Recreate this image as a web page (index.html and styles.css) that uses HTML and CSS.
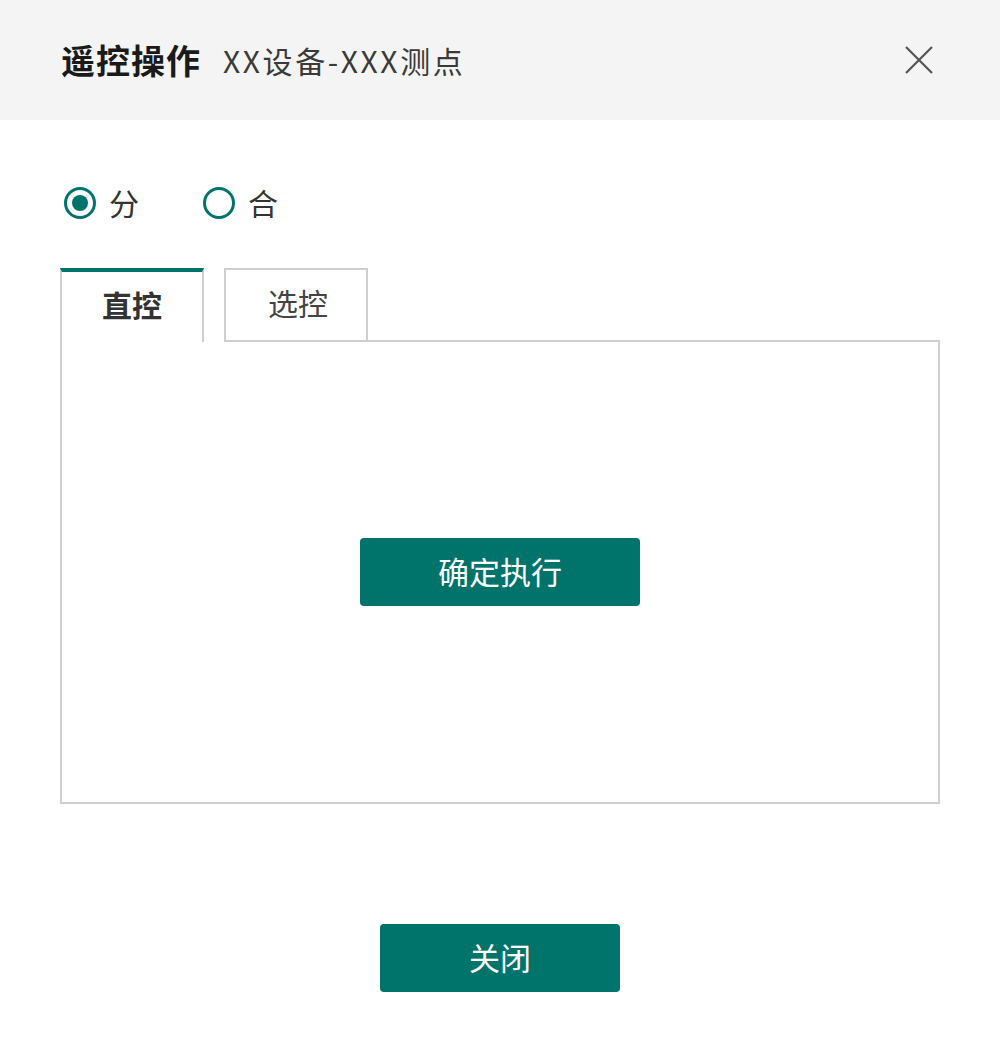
FILE: index.html
```html
<!DOCTYPE html>
<html lang="zh-CN">
<head>
<meta charset="utf-8">
<title>遥控操作</title>
<link rel="stylesheet" href="styles.css">
</head>
<body>
<div class="dialog">
  <header class="dlg-header">
    <span class="dlg-title">遥控操作</span>
    <span class="dlg-sub">XX设备-XXX测点</span>
    <button class="dlg-close" aria-label="关闭">
      <svg width="28" height="28" viewBox="0 0 28 28"><path d="M1 1L27 27M27 1L1 27" stroke="#555" stroke-width="2.2" fill="none"/></svg>
    </button>
  </header>
  <main class="dlg-body">
    <div class="radios">
      <label class="radio"><span class="radio-dot checked"></span><span class="radio-text">分</span></label>
      <label class="radio"><span class="radio-dot"></span><span class="radio-text">合</span></label>
    </div>
    <div class="tabs">
      <div class="tab-bar">
        <div class="tab active">直控</div>
        <div class="tab">选控</div>
        <div class="tab-fill"></div>
      </div>
      <div class="tab-panel">
        <button class="btn btn-exec">确定执行</button>
      </div>
    </div>
  </main>
  <footer class="dlg-footer">
    <button class="btn btn-close">关闭</button>
  </footer>
</div>
</body>
</html>
```
FILE: styles.css
```css
html, body {
  margin: 0;
  padding: 0;
  background: #fff;
}
body {
  font-family: "Noto Sans CJK SC", "Noto Sans", sans-serif;
  color: #333;
}
.dialog {
  width: 1000px;
  height: 1052px;
  display: flex;
  flex-direction: column;
}
.dlg-header {
  height: 120px;
  background: #f3f4f3;
  display: flex;
  align-items: center;
  padding: 0 60px 0 61px;
  box-sizing: border-box;
}
.dlg-title {
  font-size: 34px;
  font-weight: 700;
  color: #1a1a1a;
  letter-spacing: 1px;
  padding-bottom: 2px;
}
.dlg-sub {
  font-size: 30px;
  color: #3a3a3a;
  margin-left: 22px;
  letter-spacing: 2.6px;
}
.dlg-close {
  margin-left: auto;
  margin-right: 7px;
  background: none;
  border: 0;
  padding: 0;
  width: 28px;
  height: 28px;
  display: flex;
  cursor: pointer;
}
.dlg-body {
  padding: 0 60px;
}
.radios {
  display: flex;
  align-items: center;
  gap: 64px;
  height: 166px;
  padding-left: 4px;
  padding-bottom: 4px;
}
.radio {
  display: flex;
  align-items: center;
  gap: 13px;
}
.radio-dot {
  width: 26px;
  height: 26px;
  border: 3px solid #00736a;
  border-radius: 50%;
  position: relative;
  box-sizing: content-box;
}
.radio-dot.checked::after {
  content: "";
  position: absolute;
  left: 5px;
  top: 5px;
  width: 16px;
  height: 16px;
  border-radius: 50%;
  background: #00736a;
}
.radio-text {
  font-size: 30px;
  color: #333;
  padding-bottom: 3px;
}
.tab-bar {
  display: flex;
  align-items: flex-end;
  height: 74px;
  margin-top: -22px;
}
.tab {
  width: 144px;
  height: 74px;
  box-sizing: border-box;
  border: 2px solid #cfcfcf;
  border-bottom: 0;
  display: flex;
  align-items: center;
  justify-content: center;
  font-size: 30px;
  color: #444;
  background: #fff;
  padding-bottom: 6px;
}
.tab + .tab {
  margin-left: 20px;
  border-bottom: 2px solid #cfcfcf;
  padding-left: 4px;
}
.tab.active {
  border-top: 4px solid #00736a;
  font-weight: 700;
  color: #333;
}
.tab-fill {
  flex: 1;
  border-bottom: 2px solid #cfcfcf;
  height: 0;
}
.tab-panel {
  height: 462px;
  box-sizing: border-box;
  border: 2px solid #cfcfcf;
  border-top: 0;
  display: flex;
  align-items: center;
  justify-content: center;
}
.btn {
  border: 0;
  border-radius: 4px;
  background: #00736a;
  color: #fff;
  font-family: inherit;
  font-size: 31px;
  height: 68px;
  cursor: pointer;
  padding: 0 0 4px 0;
}
.btn-exec {
  width: 280px;
  margin-top: 0;
}
.dlg-footer {
  display: flex;
  justify-content: center;
  padding-top: 120px;
}
.btn-close {
  width: 240px;
}
```
